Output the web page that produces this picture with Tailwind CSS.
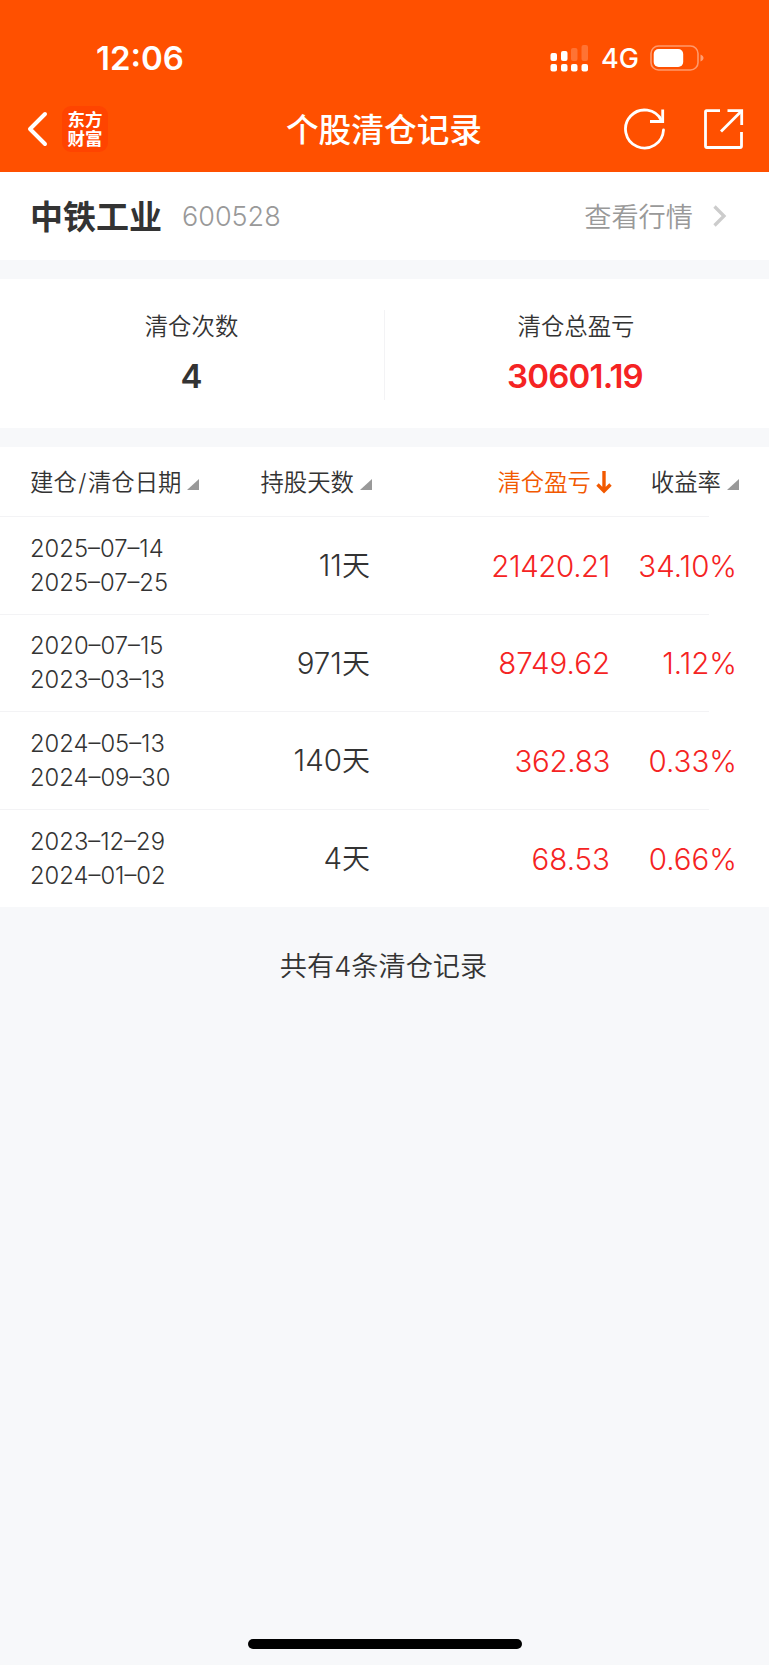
<!DOCTYPE html>
<html lang="zh-CN">
<head>
  <meta charset="UTF-8" />
  <meta name="viewport" content="width=device-width, initial-scale=1.0" />
  <title>个股清仓记录</title>
  <script src="https://cdn.jsdelivr.net/npm/@tailwindcss/browser@4"></script>
</head>

<body class="bg-[#f7f8fa] text-[#333333] font-['Inter','Noto_Sans_CJK_SC',sans-serif] w-[769px] h-[1665px] flex flex-col overflow-hidden">

  <!-- Header -->
  <header class="bg-[#ff5000] text-white h-[172px] shrink-0">
    <!-- Status bar -->
    <div class="h-[88px] pt-[28px] pl-[96px] pr-[65px] flex items-center justify-between">
      <span class="text-[33px] leading-[40px] font-semibold">12:06</span>
      <div class="flex items-center">
        <svg class="w-[39px] h-[28px]" viewBox="0 0 39 28" fill="#fff">
          <rect x="0.5" y="9" width="6.5" height="8" rx="2" />
          <rect x="11" y="7" width="6.5" height="10" rx="2" />
          <rect x="21" y="4" width="6.5" height="13" rx="2" opacity=".2" />
          <rect x="31.5" y="1" width="6.5" height="16" rx="2" opacity=".2" />
          <rect x="0.5" y="20" width="6.5" height="7.5" rx="2" />
          <rect x="11" y="20" width="6.5" height="7.5" rx="2" />
          <rect x="21" y="20" width="6.5" height="7.5" rx="2" />
          <rect x="31.5" y="20" width="6.5" height="7.5" rx="2" />
        </svg>
        <span class="ml-[12px] mt-[2px] w-[37px] text-[27px] leading-[40px] font-medium whitespace-nowrap">4G</span>
        <svg class="ml-[12px] w-[54px] h-[26px]" viewBox="0 0 54 26" fill="none">
          <rect x="1" y="1" width="47" height="24" rx="7.5" stroke="#fff" stroke-opacity=".42" stroke-width="1.6" />
          <rect x="3.7" y="4" width="29.5" height="18" rx="5" fill="#fff" />
          <path d="M50.5 9.5c2 .8 3 2 3 3.500s-1 2.700-3 3.500z" fill="#fff" fill-opacity=".45" />
        </svg>
      </div>
    </div>
    <!-- Nav bar -->
    <div class="h-[84px] grid grid-cols-[1fr_auto_1fr] items-center pb-[2px] pl-[27px] pr-[25px]">
      <div class="flex items-center">
        <svg class="w-[21px] h-[36px]" viewBox="0 0 21 36" fill="none" stroke="#fff" stroke-width="4" stroke-linecap="round" stroke-linejoin="round">
          <path d="M18 3 3 18l15 15" />
        </svg>
        <div class="ml-[14px] w-[46px] h-[46px] rounded-[9px] bg-[#ff4400] text-[17.500px] leading-[19px] font-bold flex items-center justify-center text-center">东方<br />财富</div>
      </div>
      <h1 class="mt-[2px] mr-[3px] text-[32.700px] leading-[40px] font-medium">个股清仓记录</h1>
      <div class="flex items-center justify-end">
        <svg class="w-[42px] h-[42px]" viewBox="0 0 42 42" fill="none" stroke="#fff" stroke-width="2.800">
          <path d="M39.500 22A19 19 0 1 1 37.500 12.500" stroke-linecap="round" />
          <path d="M38.700 1.500V13.500H26" />
        </svg>
        <svg class="ml-[36px] w-[42px] h-[42px]" viewBox="0 0 42 42" fill="none" stroke="#fff" stroke-width="2.800">
          <path d="M18 2.700H4.500Q3.500 2.700 3.500 4V38Q3.500 39.500 5 39.500H38Q39.500 39.500 39.500 38V24" />
          <path d="M25.500 2.700H39.700V17" />
          <path d="M39 3.500 19 23.500" />
        </svg>
      </div>
    </div>
  </header>

  <!-- Stock -->
  <section class="bg-white h-[88px] shrink-0 flex items-center pl-[30px] pr-[42px]">
    <h2 class="mt-[2px] text-[33px] leading-[40px] font-bold">中铁工业</h2>
    <span class="ml-[20px] mt-[2px] text-[27px] leading-[40px] font-light text-[#999999]">600528</span>
    <span class="ml-auto mt-[3px] text-[27.200px] leading-[40px] text-[#999999] font-[350]">查看行情</span>
    <svg class="ml-[20px] w-[14px] h-[22px]" viewBox="0 0 14 22" fill="none" stroke="#cccccc" stroke-width="3.300">
      <path d="M1.500 1.500 11 11l-9.500 9.500" />
    </svg>
  </section>

  <!-- Totals -->
  <section class="mt-[19px] bg-white h-[149px] shrink-0 flex pt-[31px]">
    <div class="w-[385px] h-[90px] pr-px border-r border-[#f3f3f5] flex flex-col items-center">
      <span class="text-[23.400px] leading-[34px] font-[350]">清仓次数</span>
      <span class="mt-[12px] text-[33px] leading-[40px] font-semibold">4</span>
    </div>
    <div class="w-[384px] flex flex-col items-center">
      <span class="pr-[2px] text-[23.400px] leading-[34px] font-[350]">清仓总盈亏</span>
      <span class="mt-[12px] pr-[4px] text-[33px] leading-[40px] font-semibold tracking-[-0.800px] text-[#f52323]">30601.19</span>
    </div>
  </section>

  <!-- Table -->
  <section class="mt-[19px] bg-white h-[460px] shrink-0">
    <div class="h-[69px] pt-[2px] grid grid-cols-[200px_142px_240px_127px] items-center pl-[30px] text-[23.400px] leading-[34px] font-[350] whitespace-nowrap">
      <div class="flex items-center">建仓<span class="px-[1.500px]">/</span>清仓日期
        <svg class="ml-[5px] mt-[3px] w-[12px] h-[11px]" viewBox="0 0 12 11" fill="#999999"><path d="M12 0V11H0z" /></svg>
      </div>
      <div class="flex items-center justify-end">持股天数
        <svg class="ml-[6px] mt-[3px] w-[12px] h-[11px]" viewBox="0 0 12 11" fill="#999999"><path d="M12 0V11H0z" /></svg>
      </div>
      <div class="flex items-center justify-end text-[#f25900]">清仓盈亏
        <svg class="ml-[5px] w-[16px] h-[23px]" viewBox="0 0 16 23" fill="none" stroke="#f25900" stroke-width="3.400"><path d="M8 0V20M1.500 13.500 8 20l6.500-6.500" /></svg>
      </div>
      <div class="flex items-center justify-end">收益率
        <svg class="ml-[6px] mt-[3px] w-[12px] h-[11px]" viewBox="0 0 12 11" fill="#999999"><path d="M12 0V11H0z" /></svg>
      </div>
    </div>

    <div class="w-[709px] h-px bg-[#f3f3f5]"></div>
    <div class="h-[97px] grid grid-cols-[200px_140px_240px_127px] items-center pl-[30px] text-[29.500px] leading-[40px] font-[350] text-right">
      <div class="text-[23.800px] leading-[34px] text-left">2025–07–14<br />2025–07–25</div>
      <div>11<span class="text-[28px]">天</span></div>
      <div class="text-[#f52323] tracking-[-0.400px]">21420.21</div>
      <div class="text-[#f52323]">34.10%</div>
    </div>

    <div class="w-[709px] h-px bg-[#f3f3f5]"></div>
    <div class="h-[96px] grid grid-cols-[200px_140px_240px_127px] items-center pl-[30px] text-[29.500px] leading-[40px] font-[350] text-right">
      <div class="text-[23.800px] leading-[34px] text-left">2020–07–15<br />2023–03–13</div>
      <div>971<span class="text-[28px]">天</span></div>
      <div class="text-[#f52323]">8749.62</div>
      <div class="text-[#f52323]">1.12%</div>
    </div>

    <div class="w-[709px] h-px bg-[#f3f3f5]"></div>
    <div class="h-[97px] grid grid-cols-[200px_140px_240px_127px] items-center pl-[30px] text-[29.500px] leading-[40px] font-[350] text-right">
      <div class="text-[23.800px] leading-[34px] text-left">2024–05–13<br />2024–09–30</div>
      <div>140<span class="text-[28px]">天</span></div>
      <div class="text-[#f52323] tracking-[-0.300px]">362.83</div>
      <div class="text-[#f52323]">0.33%</div>
    </div>

    <div class="w-[709px] h-px bg-[#f3f3f5]"></div>
    <div class="h-[97px] grid grid-cols-[200px_140px_240px_127px] items-center pl-[30px] text-[29.500px] leading-[40px] font-[350] text-right">
      <div class="text-[23.800px] leading-[34px] text-left">2023–12–29<br />2024–01–02</div>
      <div>4<span class="text-[28px]">天</span></div>
      <div class="text-[#f52323]">68.53</div>
      <div class="text-[#f52323]">0.66%</div>
    </div>
  </section>

  <p class="mt-[40px] pr-[2px] text-center text-[27.200px] leading-[40px] font-[350]">共有4条清仓记录</p>

  <!-- Home indicator -->
  <div class="mt-auto mb-[16px] ml-[247.500px] w-[274px] h-[10px] rounded-full bg-black"></div>

</body>
</html>
